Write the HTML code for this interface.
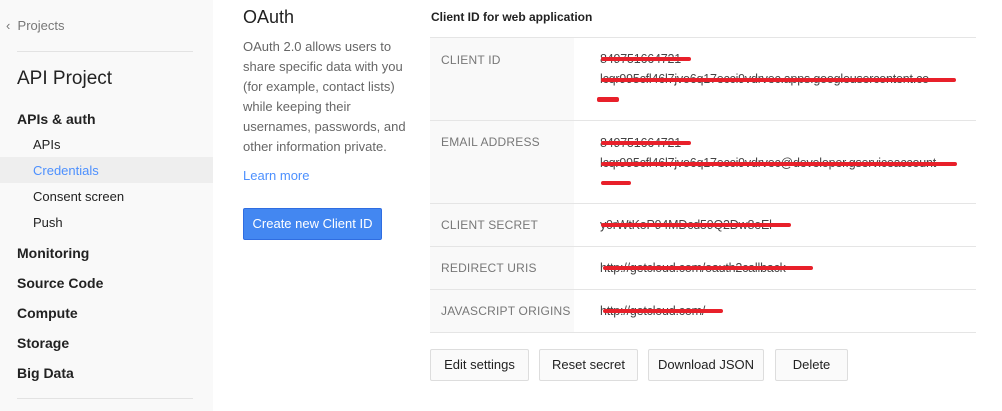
<!DOCTYPE html><html><head><style>
body{margin:0;width:1002px;height:411px;background:#fff;font-family:"Liberation Sans",sans-serif;position:relative;overflow:hidden;color:#222}
.a{position:absolute;white-space:nowrap}
.side{position:absolute;left:0;top:0;width:213px;height:411px;background:#f9f9f9}
.lab{position:absolute;left:430px;width:144px;background:#f9f9f9;font-size:12px;color:#777;letter-spacing:.2px;white-space:nowrap}
.hr{position:absolute;left:430px;width:546px;height:1px;background:#e5e5e5}
.v{font-size:12.5px;color:#444;letter-spacing:-.2px}
.r{position:absolute;height:4px;background:#e8202a;border-radius:2px}
.btn{position:absolute;top:349px;height:30px;border:1px solid #ddd;border-radius:2px;background:#fafafa;font-size:13px;line-height:30px;text-align:center;color:#222}
</style></head><body>
<div class="side"></div>
<div class="a" style="left:6px;top:18px;font-size:13px;color:#777">‹ &nbsp;Projects</div>
<div style="position:absolute;left:17px;top:51px;width:176px;height:1px;background:#e3e3e3"></div>
<div class="a" style="left:17px;top:68px;font-size:19px;color:#222">API Project</div>
<div class="a" style="left:17px;top:111px;font-size:14px;font-weight:bold">APIs &amp; auth</div>
<div class="a" style="left:33px;top:137px;font-size:13px">APIs</div>
<div style="position:absolute;left:0;top:157px;width:213px;height:26px;background:#eee"></div>
<div class="a" style="left:33px;top:163px;font-size:13px;color:#4d90fe">Credentials</div>
<div class="a" style="left:33px;top:189px;font-size:13px">Consent screen</div>
<div class="a" style="left:33px;top:215px;font-size:13px">Push</div>
<div class="a" style="left:17px;top:245px;font-size:14px;font-weight:bold">Monitoring</div>
<div class="a" style="left:17px;top:275px;font-size:14px;font-weight:bold">Source Code</div>
<div class="a" style="left:17px;top:305px;font-size:14px;font-weight:bold">Compute</div>
<div class="a" style="left:17px;top:335px;font-size:14px;font-weight:bold">Storage</div>
<div class="a" style="left:17px;top:365px;font-size:14px;font-weight:bold">Big Data</div>
<div style="position:absolute;left:17px;top:398px;width:176px;height:1px;background:#e3e3e3"></div>

<div class="a" style="left:243px;top:7px;font-size:18px;color:#222">OAuth</div>
<div class="a" style="left:243px;top:37px;font-size:13px;color:#666;line-height:20px">OAuth 2.0 allows users to<br>share specific data with you<br>(for example, contact lists)<br>while keeping their<br>usernames, passwords, and<br>other information private.</div>
<div class="a" style="left:243px;top:168px;font-size:13px;color:#4d90fe">Learn more</div>
<div class="a" style="left:243px;top:208px;width:137px;height:30px;background:#4387f1;border:1px solid #2f6de1;border-radius:2px;color:#fff;font-size:13px;line-height:30px;text-align:center">Create new Client ID</div>

<div class="a" style="left:431px;top:10px;font-size:12px;font-weight:bold;color:#222">Client ID for web application</div>
<div class="hr" style="top:37px"></div>
<div class="lab" style="top:38px;height:82px"><span style="position:absolute;left:11px;top:15px">CLIENT ID</span></div>
<div class="hr" style="top:120px"></div>
<div class="lab" style="top:121px;height:82px"><span style="position:absolute;left:11px;top:14px">EMAIL ADDRESS</span></div>
<div class="hr" style="top:203px"></div>
<div class="lab" style="top:204px;height:42px"><span style="position:absolute;left:11px;top:14px">CLIENT SECRET</span></div>
<div class="hr" style="top:246px"></div>
<div class="lab" style="top:247px;height:42px"><span style="position:absolute;left:11px;top:14px">REDIRECT URIS</span></div>
<div class="hr" style="top:289px"></div>
<div class="lab" style="top:290px;height:42px"><span style="position:absolute;left:11px;top:14px">JAVASCRIPT ORIGINS</span></div>
<div class="hr" style="top:332px"></div>

<div class="a v" style="left:600px;top:52px">849751664721-</div>
<div class="a v" style="left:600px;top:72px">lcqr995cfl46l7jvo6q17ecci9vdrvec.apps.googleusercontent.co</div>
<div class="r" style="left:601px;top:57px;width:90px"></div>
<div class="r" style="left:601px;top:78px;width:355px"></div>
<div class="r" style="left:597px;top:97px;width:22px;height:5px"></div>
<div class="a v" style="left:600px;top:136px">849751664721-</div>
<div class="a v" style="left:600px;top:156px">lcqr995cfl46l7jvo6q17ecci9vdrvec@developer.gserviceaccount</div>
<div class="r" style="left:601px;top:141px;width:90px"></div>
<div class="r" style="left:601px;top:162px;width:356px"></div>
<div class="r" style="left:601px;top:181px;width:30px"></div>
<div class="a v" style="left:600px;top:218px">y0rWtKoP94MDcd59Q2Dw8eEl</div>
<div class="r" style="left:601px;top:223px;width:190px"></div>
<div class="a v" style="left:600px;top:261px">http://getcloud.com/oauth2callback</div>
<div class="r" style="left:603px;top:266px;width:210px"></div>
<div class="a v" style="left:600px;top:304px">http://getcloud.com/</div>
<div class="r" style="left:603px;top:309px;width:120px"></div>

<div class="btn" style="left:430px;width:97px">Edit settings</div>
<div class="btn" style="left:539px;width:97px">Reset secret</div>
<div class="btn" style="left:648px;width:114px">Download JSON</div>
<div class="btn" style="left:775px;width:71px">Delete</div>
</body></html>
